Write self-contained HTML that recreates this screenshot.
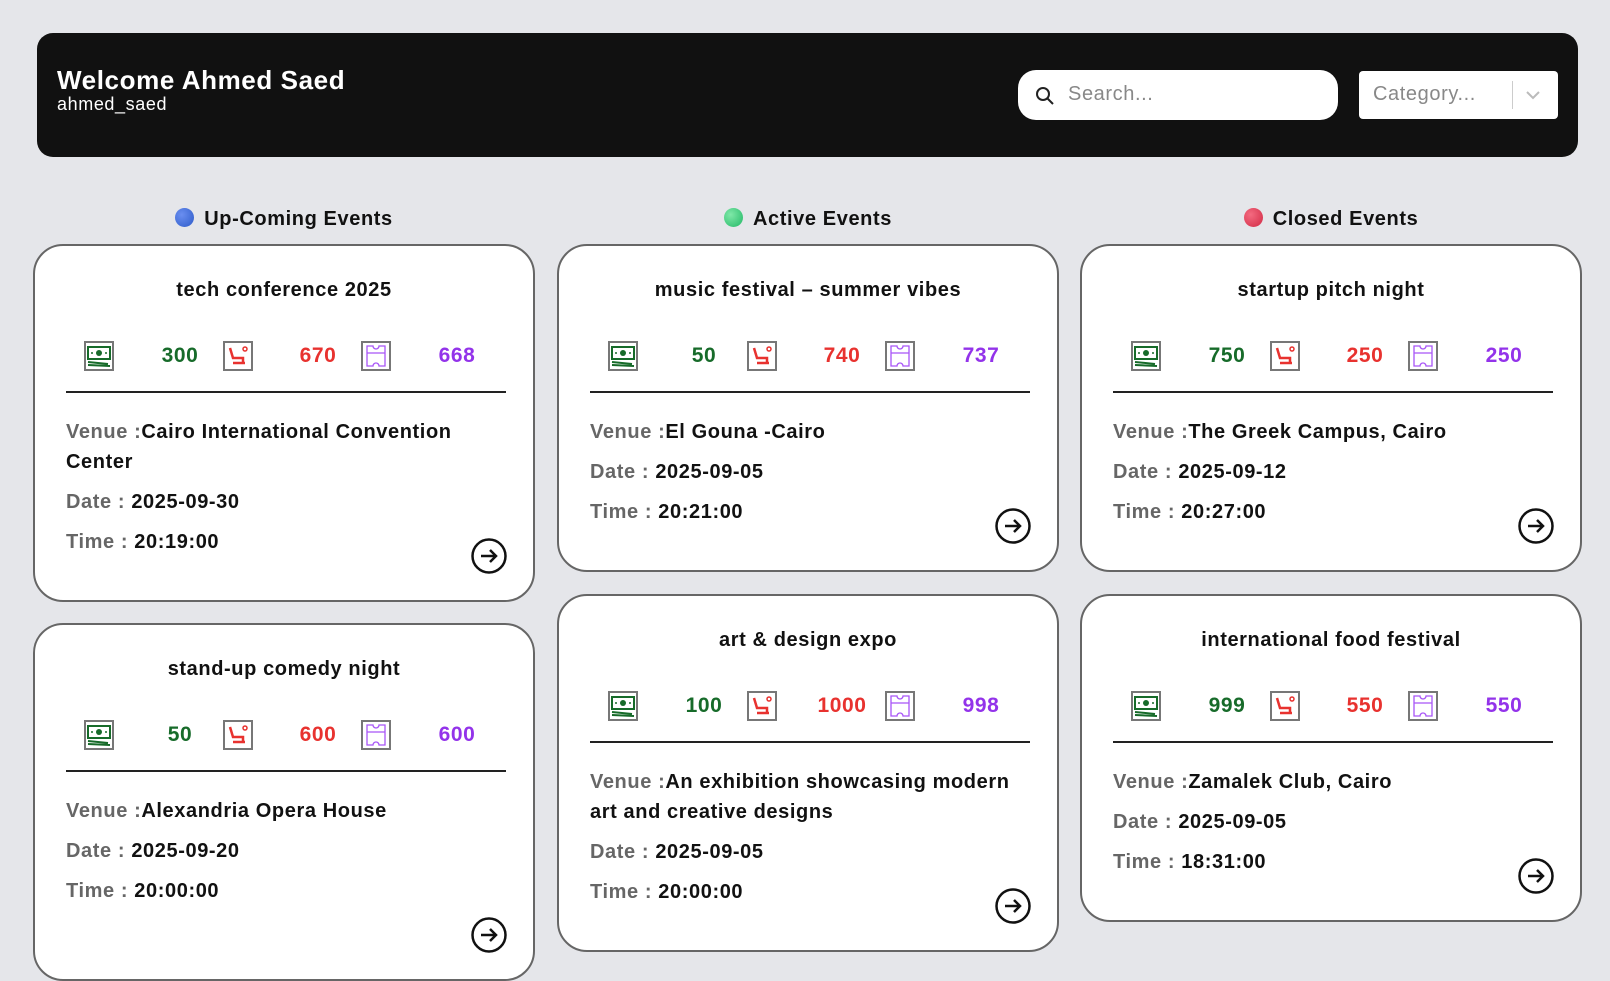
<!DOCTYPE html>
<html><head><meta charset="utf-8"><style>
*{box-sizing:border-box;margin:0;padding:0}
body{width:1610px;height:868px;overflow:hidden;background:#e5e6ea;font-family:"Liberation Sans",sans-serif;position:relative;letter-spacing:0.6px}
.hdr{position:absolute;left:37px;top:33px;width:1541px;height:124px;background:#111;border-radius:16px}
.hdr h1{position:absolute;left:20px;top:32px;color:#fff;font-size:26px;font-weight:bold}
.hdr .u{position:absolute;left:20px;top:61px;color:#fff;font-size:18px}
.search{position:absolute;left:981px;top:37px;width:320px;height:50px;background:#fff;border-radius:18px}
.search span{position:absolute;left:50px;top:13px;font-size:20px;color:#888}
.cat{position:absolute;left:1322px;top:38px;width:199px;height:48px;background:#fff;border-radius:4px}
.cat span{position:absolute;left:14px;top:12px;font-size:20px;color:#888}
.cat i{position:absolute;left:153px;top:10px;width:1px;height:28px;background:#ccc}
.sec{position:absolute;top:208px;width:502px;text-align:center;font-size:20px;font-weight:bold;color:#111}
.dot{display:inline-block;width:19px;height:19px;border-radius:50%;vertical-align:-2px;margin-right:10px}
.card{position:absolute;width:502px;background:#fff;border:2px solid #666;border-radius:30px}
.t{position:absolute;top:33px;width:100%;text-align:center;font-size:20px;font-weight:bold;color:#111}
.ic{position:absolute;top:95px;width:30px;height:30px;border:2px solid #777}
.n{position:absolute;top:98px;width:80px;text-align:center;font-size:21px;font-weight:bold}
.hr{position:absolute;left:31px;top:145px;width:440px;height:2px;background:#222}
.info{position:absolute;left:31px;top:171px;width:440px;font-size:20px;font-weight:bold;color:#111;line-height:30px}
.info p{margin-bottom:10px}
.info b{color:#666}
.ar{position:absolute;right:26px;bottom:26px;width:36px;height:36px}
</style></head><body>
<div class="hdr"><h1>Welcome Ahmed Saed</h1><div class="u">ahmed_saed</div>
<div class="search"><svg style="position:absolute;left:17px;top:16px" width="20" height="20" viewBox="0 0 20 20"><circle cx="8" cy="8" r="6" fill="none" stroke="#222" stroke-width="2"/><path d="M12.5 12.5L18 18" stroke="#222" stroke-width="2"/></svg><span>Search...</span></div>
<div class="cat"><span>Category...</span><i></i><svg style="position:absolute;left:166px;top:19px" width="16" height="10" viewBox="0 0 16 10"><path d="M2 2l6 6 6-6" fill="none" stroke="#bbb" stroke-width="2"/></svg></div>
</div>
<div class="sec" style="left:33px"><span class="dot" style="background:radial-gradient(circle at 35% 35%,#6a8ef0,#2d5bc9)"></span>Up-Coming Events</div>
<div class="sec" style="left:557px"><span class="dot" style="background:radial-gradient(circle at 35% 35%,#7fe8a8,#22b866)"></span>Active Events</div>
<div class="sec" style="left:1080px"><span class="dot" style="background:radial-gradient(circle at 35% 35%,#f46a80,#d12a45)"></span>Closed Events</div>

<script>
const S=`<svg width="26" height="26" viewBox="0 0 26 26">`;
const money=S+`<rect x="2" y="4" width="22" height="12" fill="none" stroke="#176b2a" stroke-width="2"/><circle cx="13" cy="10" r="3" fill="#176b2a"/><circle cx="6" cy="10" r="1" fill="#176b2a"/><circle cx="20" cy="10" r="1" fill="#176b2a"/><path d="M2 19l20 2M2 22l22 1" stroke="#176b2a" stroke-width="2"/></svg>`;
const seat=S+`<path d="M5 5l3 10h10v5M8 20h12" fill="none" stroke="#e8322f" stroke-width="2.5"/><circle cx="20" cy="6" r="2" fill="none" stroke="#e8322f" stroke-width="1.5"/></svg>`;
const tick=S+`<path d="M4 3h6a3 3 0 0 0 6 0h6v20h-6a3 3 0 0 0-6 0H4z M4 10h18" fill="none" stroke="#a855f7" stroke-width="1.3"/></svg>`;
const arrow=`<svg class="ar" viewBox="0 0 36 36"><circle cx="18" cy="18" r="16.5" fill="none" stroke="#111" stroke-width="2.5"/><path d="M10 18h15M19 12l6 6-6 6" fill="none" stroke="#111" stroke-width="2.5"/></svg>`;
const cards=[
[33,244,358,"tech conference 2025",300,670,668,[["Venue :","Cairo International Convention Center"],["Date : ","2025-09-30"],["Time : ","20:19:00"]]],
[557,244,328,"music festival – summer vibes",50,740,737,[["Venue :","El Gouna -Cairo"],["Date : ","2025-09-05"],["Time : ","20:21:00"]]],
[1080,244,328,"startup pitch night",750,250,250,[["Venue :","The Greek Campus, Cairo"],["Date : ","2025-09-12"],["Time : ","20:27:00"]]],
[33,623,358,"stand-up comedy night",50,600,600,[["Venue :","Alexandria Opera House"],["Date : ","2025-09-20"],["Time : ","20:00:00"]]],
[557,594,358,"art & design expo",100,1000,998,[["Venue :","An exhibition showcasing modern art and creative designs"],["Date : ","2025-09-05"],["Time : ","20:00:00"]]],
[1080,594,328,"international food festival",999,550,550,[["Venue :","Zamalek Club, Cairo"],["Date : ","2025-09-05"],["Time : ","18:31:00"]]]];
let h="";
for(const c of cards){
h+=`<div class="card" style="left:${c[0]}px;top:${c[1]}px;height:${c[2]}px"><div class="t">${c[3]}</div>
<div class="ic" style="left:49px">${money}</div><div class="n" style="left:105px;color:#176b2a">${c[4]}</div>
<div class="ic" style="left:188px">${seat}</div><div class="n" style="left:243px;color:#e8322f">${c[5]}</div>
<div class="ic" style="left:326px">${tick}</div><div class="n" style="left:382px;color:#9333ea">${c[6]}</div>
<div class="hr"></div><div class="info">${c[7].map(x=>`<p><b>${x[0]}</b>${x[1]}</p>`).join("")}</div>${arrow}</div>`;}
document.write(h);
</script>
</body></html>
